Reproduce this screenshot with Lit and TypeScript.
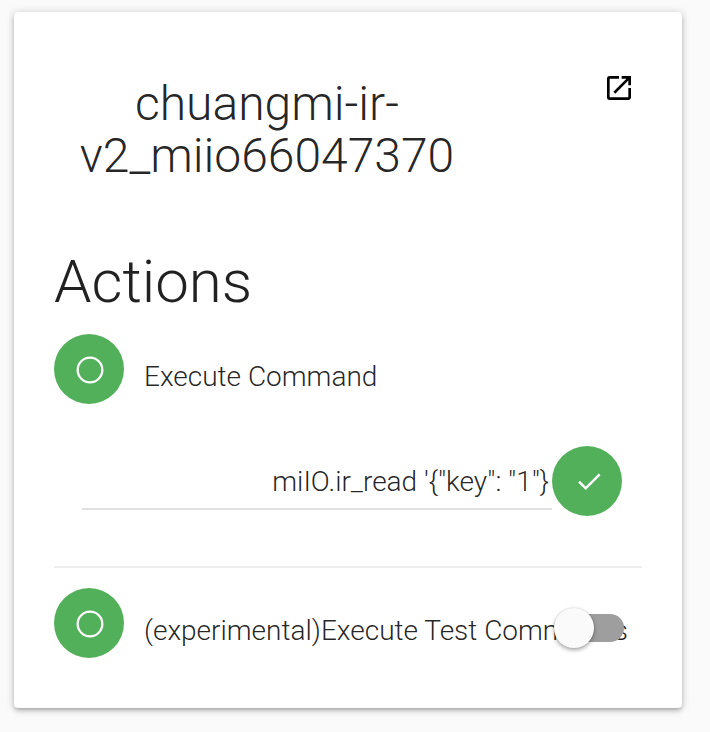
import { LitElement, html, css } from "lit";
import { customElement } from "lit/decorators.js";

const circle = html`<svg class="ico" viewBox="0 0 24 24"><circle cx="12.75" cy="12.75" r="9.25" fill="none" stroke="#fff" stroke-width="1.7"/></svg>`;

@customElement("app-root")
export class AppRoot extends LitElement {
  static styles = css`
    :host { display: block; min-height: 732px; background: #fafafa; font-family: Roboto, "Liberation Sans", sans-serif; font-weight: 300; color: rgba(0,0,0,.87); box-sizing: border-box; padding: 12px 28px 24px 14px; }
    .card { background: #fff; border-radius: 4px; height: 696px; box-sizing: border-box; padding: 66px 40px 0; box-shadow: 0 3px 4px 0 rgba(0,0,0,.14), 0 3px 3px -2px rgba(0,0,0,.12), 0 1px 8px 0 rgba(0,0,0,.2); }
    .head { display: flex; justify-content: space-between; align-items: flex-start; }
    h1 { margin: 0; width: 426px; text-align: center; font-size: 48px; font-weight: 300; line-height: 52px; }
    .open { width: 32px; height: 32px; margin: -6px 7px 0 0; display: block; }
    h2 { margin: 65px 0 17px; font-size: 60px; font-weight: 300; line-height: 70px; }
    .row { position: relative; display: flex; align-items: center; gap: 20px; font-size: 28px; line-height: 30px; }
    .fab { width: 70px; height: 70px; flex: none; border-radius: 50%; background: #52b05a; display: flex; align-items: center; justify-content: center; }
    .ico { width: 32px; height: 32px; }
    .label { position: relative; top: 8px; white-space: nowrap; }
    .cmd { display: flex; margin: 42px 20px 0 28px; }
    .field { flex: 1; height: 64px; box-sizing: border-box; border-bottom: 2px solid #e0e0e0; text-align: right; font-size: 28px; line-height: 30px; padding: 21px 3px 0 0; white-space: nowrap; }
    hr { border: 0; border-top: 2px solid #eee; margin: 50px 0 20px; }
    .switch { position: absolute; left: 500px; top: 26px; width: 70px; height: 28px; border-radius: 14px; background: #9e9e9e; }
    .thumb { position: absolute; left: 0; top: -6px; width: 40px; height: 40px; border-radius: 50%; background: #fafafa; box-shadow: 0 2px 4px rgba(0,0,0,.35), 0 0 2px rgba(0,0,0,.12); }
  `;
  render() {
    return html`<div class="card">
      <div class="head">
        <h1>chuangmi-ir-v2_miio66047370</h1>
        <svg class="open" viewBox="0 0 24 24"><path d="M19 19H5V5h7V3H5a2 2 0 0 0-2 2v14a2 2 0 0 0 2 2h14c1.1 0 2-.9 2-2v-7h-2v7zM14 3v2h3.59l-9.83 9.83 1.41 1.41L19 6.41V10h2V3h-7z"/></svg>
      </div>
      <h2>Actions</h2>
      <div class="row"><div class="fab">${circle}</div><span class="label">Execute Command</span></div>
      <div class="cmd">
        <div class="field">miIO.ir_read '{"key": "1"}</div>
        <div class="fab"><svg class="ico" viewBox="0 0 24 24"><path d="M6 12.5l5 5L21.5 7" fill="none" stroke="#fff" stroke-width="1.9"/></svg></div>
      </div>
      <hr />
      <div class="row"><div class="fab">${circle}</div><span class="label">(experimental)Execute Test Commands</span>
        <div class="switch"><div class="thumb"></div></div></div>
    </div>`;
  }
}
